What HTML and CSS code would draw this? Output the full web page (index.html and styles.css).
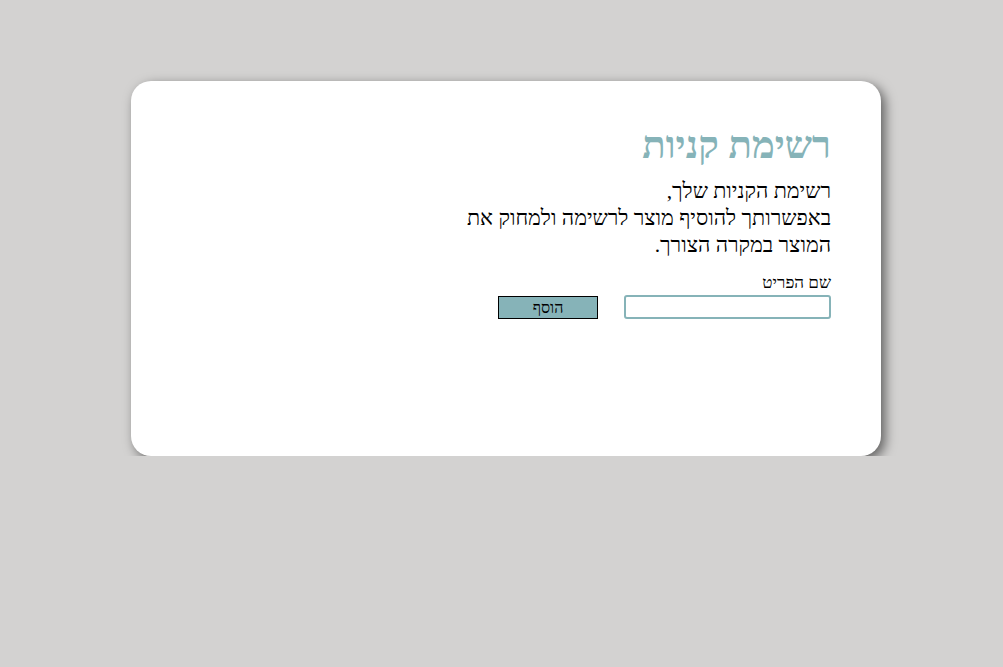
FILE: index.html
```html
<!DOCTYPE html>
<html lang="he" dir="rtl">
<head>
<meta charset="utf-8">
<title>רשימת קניות</title>
<link rel="stylesheet" href="styles.css">
</head>
<body>
<main class="page">
  <section class="card">
    <h1 class="title">רשימת קניות</h1>
    <p class="intro">רשימת הקניות שלך,<br>באפשרותך להוסיף מוצר לרשימה ולמחוק את<br>המוצר במקרה הצורך.</p>
    <form class="add-form">
      <label class="field">
        <span class="label">שם הפריט</span>
        <input class="item-input" type="text">
      </label>
      <button class="add-btn" type="button">הוסף</button>
    </form>
  </section>
</main>
</body>
</html>
```

FILE: styles.css
```css
html, body {
  margin: 0;
  padding: 0;
  background: #d3d2d1;
  font-family: "Liberation Serif", "Times New Roman", serif;
  color: #000;
}
.page {
  display: block;
  direction: ltr;
  padding: 81px 0 0 131px;
}
.card {
  direction: rtl;
  width: 750px;
  height: 375px;
  box-sizing: border-box;
  background: #fff;
  border-radius: 20px;
  box-shadow: 4px 4px 12px rgba(0,0,0,0.55);
  padding: 30px 50px 0 50px;
}
.title {
  margin: 11px 0 0;
  font-size: 38.5px;
  font-weight: bold;
  color: #86b3b8;
  line-height: 1.2;
}
.intro {
  margin: 10px 0 0;
  font-size: 21.5px;
  line-height: 27px;
}
.add-form {
  display: flex;
  align-items: flex-end;
  gap: 26px;
  margin-top: 14px;
}
.field {
  display: flex;
  flex-direction: column;
  font-size: 17px;
}
.label { line-height: 19px; margin-bottom: 3px; }
.item-input {
  width: 207px;
  height: 24px;
  box-sizing: border-box;
  border: 2px solid #86b3b8;
  border-radius: 3px;
  margin: 0;
  padding: 0 4px;
  font: inherit;
}
.add-btn {
  width: 100px;
  height: 23px;
  margin: 0;
  padding: 0;
  box-sizing: border-box;
  background: #86b3b8;
  border: 1px solid #000;
  font-family: "Liberation Serif", serif;
  font-size: 16px;
  color: #000;
}
```
